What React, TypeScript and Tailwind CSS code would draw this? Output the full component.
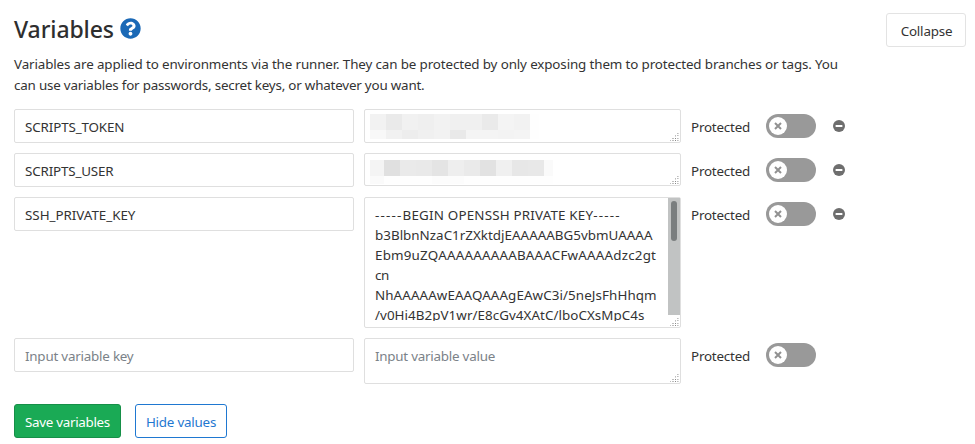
import type { ReactNode } from "react";
import { FaQuestionCircle } from "react-icons/fa";

function Grip() {
  return (
    <svg className="absolute right-0 bottom-0" width="10" height="10" viewBox="0 0 10 10" shapeRendering="crispEdges">
      <g fill="#bdbdbd">
        <rect x="7" y="1" width="1" height="1" />
        <rect x="5" y="3" width="1" height="1" />
        <rect x="7" y="3" width="1" height="1" />
        <rect x="2" y="6" width="2" height="1" />
        <rect x="7" y="6" width="1" height="1" />
        <rect x="0" y="8" width="1" height="1" />
        <rect x="2" y="8" width="2" height="1" />
        <rect x="7" y="8" width="1" height="1" />
      </g>
      <g fill="#8a8a8a">
        <rect x="5" y="6" width="1" height="1" />
        <rect x="5" y="8" width="1" height="1" />
      </g>
      <g fill="#d6d6d6">
        <rect x="5" y="4" width="1" height="1" />
        <rect x="8" y="1" width="1" height="1" />
        <rect x="8" y="3" width="1" height="1" />
        <rect x="8" y="6" width="1" height="1" />
        <rect x="8" y="8" width="1" height="1" />
      </g>
    </svg>
  );
}

function Toggle() {
  return (
    <div className="mt-[5px] flex h-6 w-[50px] shrink-0 items-center rounded-full bg-[#999] pl-[3px]">
      <span className="flex size-[18px] items-center justify-center rounded-full bg-white">
        <svg width="8" height="8" viewBox="0 0 8 8" fill="none" stroke="#919191" strokeWidth="2">
          <path d="M1 1l6 6M7 1L1 7" />
        </svg>
      </span>
    </div>
  );
}

function RemoveIcon() {
  return (
    <svg className="mt-[11px] ml-[17px] shrink-0" width="12" height="12" viewBox="0 0 12 12">
      <circle cx="6" cy="6" r="6" fill="#6e6e6e" />
      <rect x="2.6" y="5" width="6.8" height="2" rx="0.3" fill="#fff" />
    </svg>
  );
}

type RowProps = { name: ReactNode; valueClass: string; children?: ReactNode; removable?: boolean };

function Row({ name, valueClass, children, removable = true }: RowProps) {
  return (
    <div className="flex items-start">
      <div className="h-[34px] w-[340px] shrink-0 rounded-[2px] border border-[#dfdfdf] pt-[7px] pl-[10px] leading-5">
        {name}
      </div>
      <div className={`relative ml-[10px] w-[317px] shrink-0 rounded-[2px] border border-[#dfdfdf] ${valueClass}`}>
        {children}
        <Grip />
      </div>
      <span className="mt-2 ml-[10px] w-[75px] shrink-0 leading-5 tracking-[-0.2px]">Protected</span>
      <Toggle />
      {removable && <RemoveIcon />}
    </div>
  );
}

function Cells({ classes, height }: { classes: string[]; height: string }) {
  return (
    <div className={`flex ${height}`}>
      {classes.map((c, i) => (
        <span key={i} className={c} />
      ))}
    </div>
  );
}

const tokenTop = [
  "w-4 bg-[#f2f2f2]", "w-4 bg-[#eaeaea]", "w-4 bg-[#f1f1f1]", "w-4 bg-[#efefef]", "w-4 bg-[#f2f2f2]",
  "w-4 bg-[#f0f0f0]", "w-4 bg-[#f0f0f0]", "w-4 bg-[#eaeaea]", "w-4 bg-[#f4f4f4]", "w-4 bg-[#f2f2f2]", "w-[9px] bg-[#fefefe]",
];
const tokenBottom = [
  "w-4 bg-[#f8f8f8]", "w-4 bg-[#f1f1f1]", "w-4 bg-[#ededed]", "w-4 bg-[#f0f0f0]", "w-4 bg-[#f2f2f2]",
  "w-4 bg-[#e9e9e9]", "w-4 bg-[#f4f4f4]", "w-4 bg-[#f4f4f4]", "w-4 bg-[#f3f3f3]", "w-4 bg-[#f4f4f4]", "w-[9px] bg-[#fefefe]",
];
const userTop = [
  "w-[14px] bg-[#f4f4f4]", "w-4 bg-[#e0e0e0]", "w-4 bg-[#eaeaea]", "w-4 bg-[#e9e9e9]", "w-4 bg-[#e4e4e4]",
  "w-4 bg-[#eeeeee]", "w-4 bg-[#eaeaea]", "w-4 bg-[#e2e2e2]", "w-4 bg-[#f0f0f0]", "w-4 bg-[#e7e7e7]", "w-4 bg-[#e8e8e8]", "w-[9px] bg-[#fafafa]",
];
const userBottom = ["w-[14px] bg-[#fafafa]", "w-12 bg-[#fefefe]", "w-8 bg-[#fcfcfc]", "w-[89px] bg-[#fefefe]"];

export default function App() {
  return (
    <main className="h-[444px] w-[975px] overflow-hidden bg-white pt-[13px] pr-[9px] pl-[14px] font-['Noto_Sans',sans-serif] text-[13.4px] text-[#333]">
      <header className="flex h-[41px] items-start justify-between">
        <div className="flex items-start">
          <h4 className="w-[106px] text-[23px] leading-8 font-medium tracking-[-0.1px] whitespace-nowrap text-[#2e2e2e]">Variables</h4>
          <FaQuestionCircle className="mt-[5px] text-[#1b69b6]" size={21} />
        </div>
        <button className="h-[34px] w-20 rounded-[3px] border border-[#e3e3e3] pt-[2px] pl-[1px] tracking-[-0.2px]">Collapse</button>
      </header>
      <p className="leading-[21px] whitespace-nowrap">
        <span className="block tracking-[-0.13px]">
          Variables are applied to environments via the runner. They can be protected by only exposing them to protected branches or tags. You
        </span>
        <span className="block tracking-[-0.2px]">can use variables for passwords, secret keys, or whatever you want.</span>
      </p>

      <div className="mt-[13px] flex flex-col gap-[10px]">
        <Row name={<span className="tracking-[-0.13px]">SCRIPTS_TOKEN</span>} valueClass="h-[34px] pt-[4px] pl-[5px]">
          <Cells classes={tokenTop} height="h-4" />
          <Cells classes={tokenBottom} height="h-[9px]" />
        </Row>
        <Row name={<span className="tracking-[-0.17px]">SCRIPTS_USER</span>} valueClass="h-[33px] pt-[6px] pl-[5px]">
          <Cells classes={userTop} height="h-4" />
          <Cells classes={userBottom} height="h-2" />
        </Row>
        <Row name={<span className="tracking-[-0.03px]">SSH_PRIVATE_KEY</span>} valueClass="flex h-[131px]">
          <div className="mt-[7px] h-[116px] w-[303px] overflow-hidden pl-[10px] leading-5 whitespace-nowrap">
            <div className="flex">
              <span className="tracking-[1.2px]">-----</span>
              <span className="tracking-[0.18px]">BEGIN OPENSSH PRIVATE KEY</span>
              <span className="tracking-[1.2px]">-----</span>
            </div>
            <div className="tracking-[0.01px]">b3BlbnNzaC1rZXktdjEAAAAABG5vbmUAAAA</div>
            <div className="tracking-[0.19px]">Ebm9uZQAAAAAAAAABAAACFwAAAAdzc2gt</div>
            <div className="tracking-[-0.4px]">cn</div>
            <div className="tracking-[0.08px]">NhAAAAAwEAAQAAAgEAwC3i/5neJsFhHhqm</div>
            <div className="tracking-[0.05px]">/v0Hi4B2pV1wr/E8cGv4XAtC/lboCXsMpC4s</div>
          </div>
          <div className="h-[117px] w-3 bg-[#c1c3c3] pt-[3px] pl-[3px]">
            <div className="h-10 w-[6px] rounded-full bg-[#7a7e7f]" />
          </div>
        </Row>
        <Row
          name={<span className="tracking-[-0.22px] text-[#7b8288]">Input variable key</span>}
          valueClass="h-[46px] pt-[7px] pl-[10px] leading-5"
          removable={false}
        >
          <span className="tracking-[-0.24px] text-[#7b8288]">Input variable value</span>
        </Row>
      </div>

      <footer className="mt-5 flex gap-[14px]">
        <button className="h-[34px] w-[107px] rounded-[3px] border border-[#168f48] bg-[#1aaa55] pt-[2px] tracking-[-0.3px] text-white">Save variables</button>
        <button className="h-[34px] w-[92px] rounded-[3px] border border-[#1f78d1] pt-[2px] tracking-[-0.22px] text-[#1f78d1]">Hide values</button>
      </footer>
    </main>
  );
}
